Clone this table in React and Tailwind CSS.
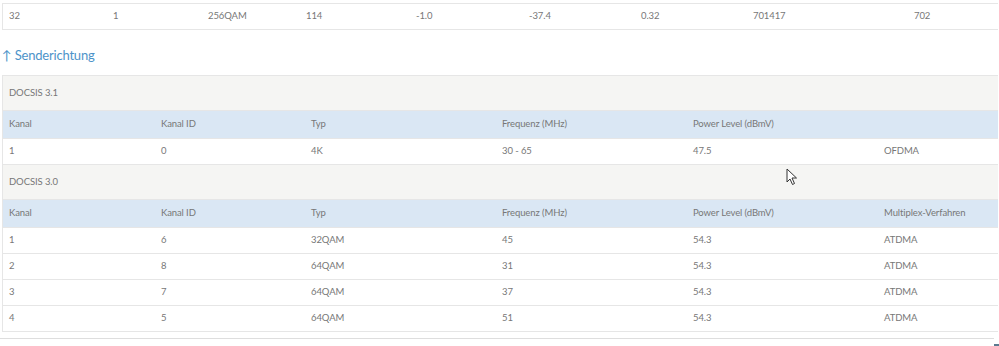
import React from "react";

const top = ["32", "1", "256QAM", "114", "-1.0", "-37.4", "0.32", "701417", "702"];
const topCols = "grid-cols-[104px_95px_98px_110px_113px_112px_112px_161px_1fr]";

const cols = "grid-cols-[152px_150px_191px_191px_191px_1fr]";
const head = ["Kanal", "Kanal ID", "Typ", "Frequenz (MHz)", "Power Level (dBmV)"];

const d31 = [["1", "0", "4K", "30 - 65", "47.5", "OFDMA"]];
const d30 = [
  ["1", "6", "32QAM", "45", "54.3", "ATDMA"],
  ["2", "8", "64QAM", "31", "54.3", "ATDMA"],
  ["3", "7", "64QAM", "37", "54.3", "ATDMA"],
  ["4", "5", "64QAM", "51", "54.3", "ATDMA"],
];

function Section({ title }) {
  return (
    <div className="h-[35px] flex items-center pl-[6px] bg-[#f5f5f3] border-b border-[#e6e6e6]">
      {title}
    </div>
  );
}

function Head({ last }) {
  return (
    <div className={`grid ${cols} h-[28px] items-center bg-[#dae7f4] border-b border-[#e6e6e6]`}>
      {head.map((h, i) => (
        <div key={i} className="pl-[6px]">{h}</div>
      ))}
      <div className="pl-[6px]">{last}</div>
    </div>
  );
}

function Row({ r }) {
  return (
    <div className={`grid ${cols} h-[26px] items-center bg-white border-b border-[#e6e6e6]`}>
      {r.map((c, i) => (
        <div key={i} className="pl-[6px]">{c}</div>
      ))}
    </div>
  );
}

export default function App() {
  return (
    <div
      className="relative w-[999px] h-[346px] bg-white text-[#777777] text-[9.5px] tracking-[-0.1px] overflow-hidden"
      style={{ fontFamily: "Lato, 'Open Sans', sans-serif" }}
    >
      <div className="pt-[3px] pl-[2px] pr-[1px]">
        <div className={`grid ${topCols} h-[27px] items-center border-t border-b border-l border-[#e6e6e6]`}>
          {top.map((c, i) => (
            <div key={i} className="pl-[6px]">{c}</div>
          ))}
        </div>
        <div className="h-[45px] pt-[7px] flex items-center text-[13px] text-[#4d93c9] tracking-[-0.2px]">
          ↑ Senderichtung
        </div>
        <div className="border-t border-l border-[#e6e6e6]">
          <Section title="DOCSIS 3.1" />
          <Head last="" />
          {d31.map((r, i) => (
            <Row key={i} r={r} />
          ))}
          <Section title="DOCSIS 3.0" />
          <Head last="Multiplex-Verfahren" />
          {d30.map((r, i) => (
            <Row key={i} r={r} />
          ))}
        </div>
        <div className="h-[6px]" />
        <div className="border-t border-[#dedede] mr-[4px] -ml-[2px]" />
      </div>
      <svg className="absolute left-[786px] top-[168px]" width="12" height="18" viewBox="0 0 12 18">
        <path d="M1 1 L1 14 L4 11 L6.5 16.5 L8.5 15.5 L6 10 L10.5 10 Z" fill="white" stroke="#333" strokeWidth="1" strokeLinejoin="round" />
      </svg>
      <div className="absolute right-0 bottom-0 w-[5px] h-[2px] bg-[#5a7a90]" />
    </div>
  );
}
